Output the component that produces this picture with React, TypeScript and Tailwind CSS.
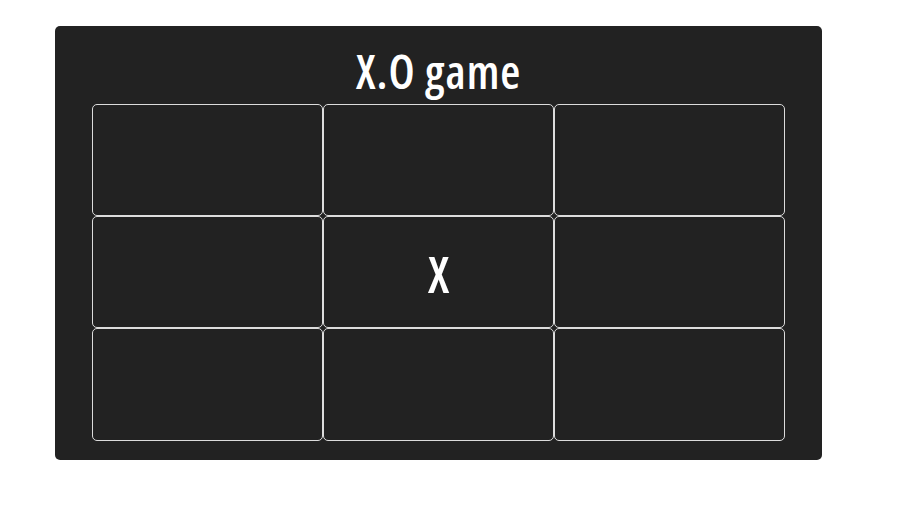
import React from "react";

const cells: string[] = ["", "", "", "", "X", "", "", "", ""];

export default function App() {
  return (
    <div className="min-h-screen bg-white pt-[26px] pl-[55px] font-['Open_Sans',sans-serif]">
      <div className="w-[767px] h-[434px] rounded-[5px] bg-[#222222] flex flex-col items-center">
        <h1 className="mt-[16px] h-[62px] text-[46px] leading-[58px] text-white font-semibold font-stretch-[75%] tracking-[1px]">
          X.O game
        </h1>
        <div className="grid grid-cols-[231px_231px_231px] grid-rows-[112px_112px_113px]">
          {cells.map((c, i) => (
            <div
              key={i}
              className="border border-[#dcdcdc] rounded-[5px] flex items-center justify-center text-white text-[50px] leading-none pt-[4px] font-semibold font-stretch-[75%]"
            >
              {c}
            </div>
          ))}
        </div>
      </div>
    </div>
  );
}
